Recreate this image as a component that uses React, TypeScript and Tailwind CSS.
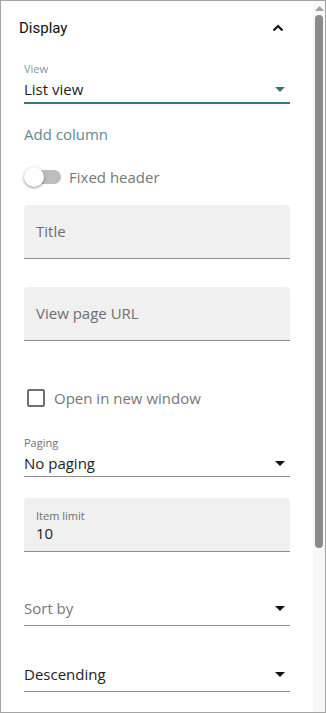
import React from 'react';

const Caret = ({ color }: { color: string }) => (
  <svg width="10" height="5" viewBox="0 0 10 5" className="shrink-0">
    <path d="M0 0h10L5 5z" fill={color} />
  </svg>
);

const SelectField: React.FC<{ label?: string; value: string; placeholder?: boolean; active?: boolean }> = ({ label, value, placeholder, active }) => (
  <div className={`${active ? 'border-b-2 border-[#3b7575]' : 'border-b border-[#8f8f8f]'} ${label ? '' : 'pb-[4px]'}`}>
    {label && (
      <div className={`text-[11px] leading-[14px] ${active ? 'text-[#6f9f9f]' : 'text-[#6f6f6f]'}`}>{label}</div>
    )}
    <div className="flex items-center justify-between h-[26px] pr-[5px]">
      <span className={`text-[15px] ${placeholder ? 'text-[#777]' : 'text-[#222]'}`}>{value}</span>
      <Caret color={active ? '#3b7575' : '#111'} />
    </div>
  </div>
);

const FilledField: React.FC<{ label: string; value?: string }> = ({ label, value }) => (
  <div className="h-[54px] bg-[#f0f0f0] rounded-t-[4px] border-b border-[#8f8f8f] px-[12px] flex flex-col justify-center">
    {value ? (
      <>
        <div className="text-[11px] leading-[14px] text-[#6f6f6f] mt-[2px]">{label}</div>
        <div className="text-[15px] leading-[20px] text-[#222]">{value}</div>
      </>
    ) : (
      <div className="text-[15px] text-[#6f6f6f]">{label}</div>
    )}
  </div>
);

export default function App() {
  return (
    <div className="w-[326px] h-[713px] border border-[#a3a3a3] bg-white flex overflow-hidden font-['Open_Sans',sans-serif]">
      <div className="flex-1 flex flex-col">
        {/* header */}
        <div className="h-[54px] shrink-0 flex items-center justify-between pl-[18px] pr-[29px]">
          <span className="font-['Roboto',sans-serif] text-[15px] text-[#111]">Display</span>
          <svg width="12" height="8" viewBox="0 0 12 8">
            <path d="M1.5 6.5L6 2l4.5 4.5" fill="none" stroke="#111" strokeWidth="2.2" />
          </svg>
        </div>

        <div className="px-[23px] flex flex-col">
          <div className="mt-[7px]">
            <SelectField label="View" value="List view" active />
          </div>

          <div className="mt-[20px] h-[20px] flex items-center text-[15px] text-[#5e8b8d]">Add column</div>

          <div className="mt-[23px] h-[20px] flex items-center">
            <div className="relative w-[38px] h-[20px] flex items-center">
              <div className="absolute left-[5px] w-[32px] h-[14px] rounded-full bg-[#bdbdbd]" />
              <div className="absolute left-0 w-[20px] h-[20px] rounded-full bg-white shadow-[0_1px_3px_rgba(0,0,0,0.45)]" />
            </div>
            <span className="ml-[7px] text-[15px] text-[#777]">Fixed header</span>
          </div>

          <div className="mt-[18px]">
            <FilledField label="Title" />
          </div>
          <div className="mt-[28px]">
            <FilledField label="View page URL" />
          </div>

          <div className="mt-[47px] h-[20px] flex items-center">
            <div className="ml-[3px] w-[18px] h-[18px] border-2 border-[#707070] rounded-[2px]" />
            <span className="ml-[9px] text-[15px] text-[#777]">Open in new window</span>
          </div>

          <div className="mt-[28px]">
            <SelectField label="Paging" value="No paging" />
          </div>

          <div className="mt-[21px]">
            <FilledField label="Item limit" value="10" />
          </div>

          <div className="mt-[43px]">
            <SelectField value="Sort by" placeholder />
          </div>
          <div className="mt-[35px]">
            <SelectField value="Descending" />
          </div>
        </div>
      </div>

      {/* scrollbar */}
      <div className="w-[12px] shrink-0 bg-[#f7f7f7] flex flex-col items-center">
        <svg width="9" height="5" viewBox="0 0 9 5" className="mt-[5px]">
          <path d="M0 5L4.5 0L9 5z" fill="#a3a3a3" />
        </svg>
        <div className="mt-[4px] w-[8px] h-[533px] rounded-full bg-[#8a8a8a]" />
      </div>
    </div>
  );
}
